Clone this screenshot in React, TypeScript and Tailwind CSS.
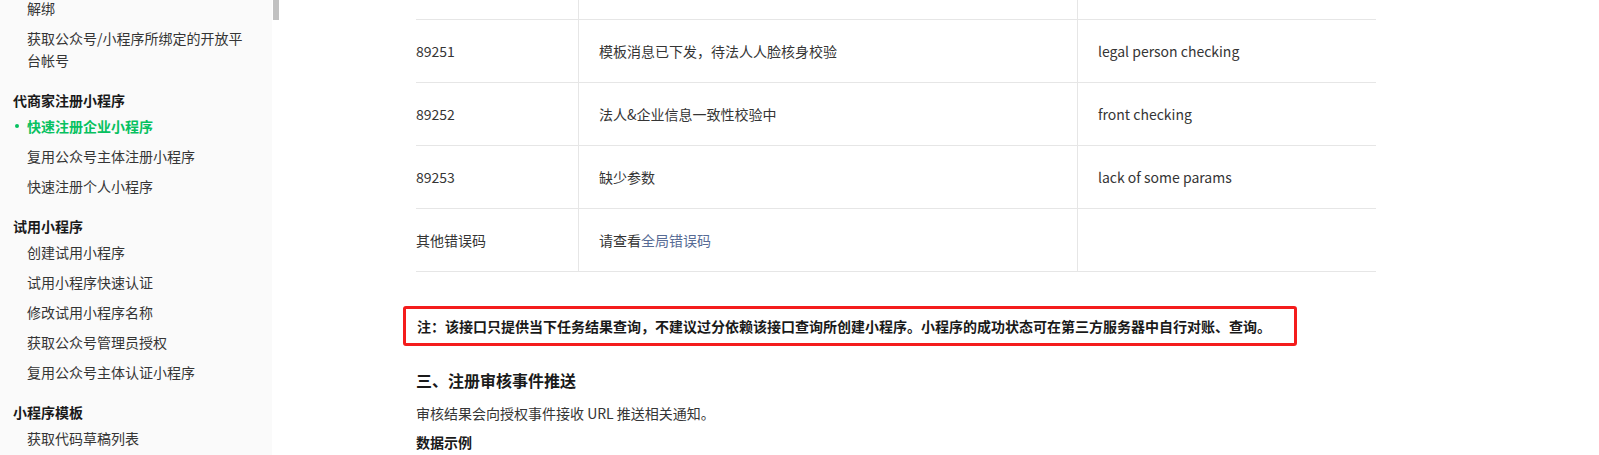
import React from 'react';

const font = { fontFamily: '"Noto Sans CJK SC", "Noto Sans", sans-serif' };

interface NavGroup {
  title?: string;
  items: { label: string; active?: boolean }[];
}

const groups: NavGroup[] = [
  {
    items: [{ label: '解绑' }, { label: '获取公众号/小程序所绑定的开放平台帐号' }],
  },
  {
    title: '代商家注册小程序',
    items: [
      { label: '快速注册企业小程序', active: true },
      { label: '复用公众号主体注册小程序' },
      { label: '快速注册个人小程序' },
    ],
  },
  {
    title: '试用小程序',
    items: [
      { label: '创建试用小程序' },
      { label: '试用小程序快速认证' },
      { label: '修改试用小程序名称' },
      { label: '获取公众号管理员授权' },
      { label: '复用公众号主体认证小程序' },
    ],
  },
  {
    title: '小程序模板',
    items: [{ label: '获取代码草稿列表' }],
  },
];

const rows = [
  { code: '89251', desc: '模板消息已下发，待法人人脸核身校验', en: 'legal person checking' },
  { code: '89252', desc: '法人&企业信息一致性校验中', en: 'front checking' },
  { code: '89253', desc: '缺少参数', en: 'lack of some params' },
];

const Sidebar = () => (
  <aside className="w-[272px] h-screen shrink-0 overflow-hidden bg-[#fafafa]">
    {groups.map((g, gi) => (
      <div key={gi}>
        {g.title && (
          <div className="mt-[14px] pl-[13px] text-[14px] leading-[22px] font-bold text-[#1a1a1a]">
            {g.title}
          </div>
        )}
        {g.items.map((it, ii) => (
          <div
            key={it.label}
            className={`relative pl-[27px] pr-[24px] text-[14px] ${
              gi === 0 && ii === 0 ? 'pt-0 pb-[7px] leading-[16px]' : 'py-[4px] leading-[22px]'
            } ${it.active ? 'font-bold text-[#07c160]' : 'text-[#353535]'}`}
          >
            {it.active && (
              <span className="absolute left-[15px] top-[13px] w-[4px] h-[4px] rounded-full bg-[#07c160]" />
            )}
            {it.label}
          </div>
        ))}
      </div>
    ))}
  </aside>
);

const Cell = ({ children, className = '' }: { children?: React.ReactNode; className?: string }) => (
  <div className={`flex items-center ${className}`}>{children}</div>
);

const App = () => {
  return (
    <div className="flex h-screen overflow-hidden bg-white text-[#353535]" style={font}>
      <Sidebar />
      <div className="w-[7px] shrink-0 pl-[1px]">
        <div className="w-[6px] h-[20px] bg-[#c1c1c1]" />
      </div>
      <main className="pl-[137px]">
        <div className="w-[960px] text-[14px]">
          <div className="grid grid-cols-[162px_499px_299px] h-[20px] border-b border-[#e6e6e6]">
            <Cell />
            <Cell className="border-l border-[#e6e6e6]" />
            <Cell className="border-l border-[#e6e6e6]" />
          </div>
          {rows.map((r) => (
            <div key={r.code} className="grid grid-cols-[162px_499px_299px] h-[63px] border-b border-[#e6e6e6]">
              <Cell>{r.code}</Cell>
              <Cell className="border-l border-[#e6e6e6] pl-[20px]">{r.desc}</Cell>
              <Cell className="border-l border-[#e6e6e6] pl-[20px]">{r.en}</Cell>
            </div>
          ))}
          <div className="grid grid-cols-[162px_499px_299px] h-[63px] border-b border-[#e6e6e6]">
            <Cell>其他错误码</Cell>
            <Cell className="border-l border-[#e6e6e6] pl-[20px]">
              请查看<a className="text-[#576b95]">全局错误码</a>
            </Cell>
            <Cell className="border-l border-[#e6e6e6]" />
          </div>

          <div className="mt-[34px] -ml-[13px] w-[894px] h-[40px] flex items-center border-[3px] border-[#f41c1c] rounded-[3px] pl-[11px]">
            <p className="text-[14px] leading-[22px] font-bold text-[#1a1a1a]">
              注：该接口只提供当下任务结果查询，不建议过分依赖该接口查询所创建小程序。小程序的成功状态可在第三方服务器中自行对账、查询。
            </p>
          </div>

          <h3 className="mt-[22px] text-[16px] leading-[24px] font-bold text-[#1a1a1a]">三、注册审核事件推送</h3>
          <p className="mt-[10px] text-[14px] leading-[22px]">审核结果会向授权事件接收 URL 推送相关通知。</p>
          <p className="mt-[7px] text-[14px] leading-[22px] font-bold text-[#1a1a1a]">数据示例</p>
        </div>
      </main>
    </div>
  );
};

export default App;
